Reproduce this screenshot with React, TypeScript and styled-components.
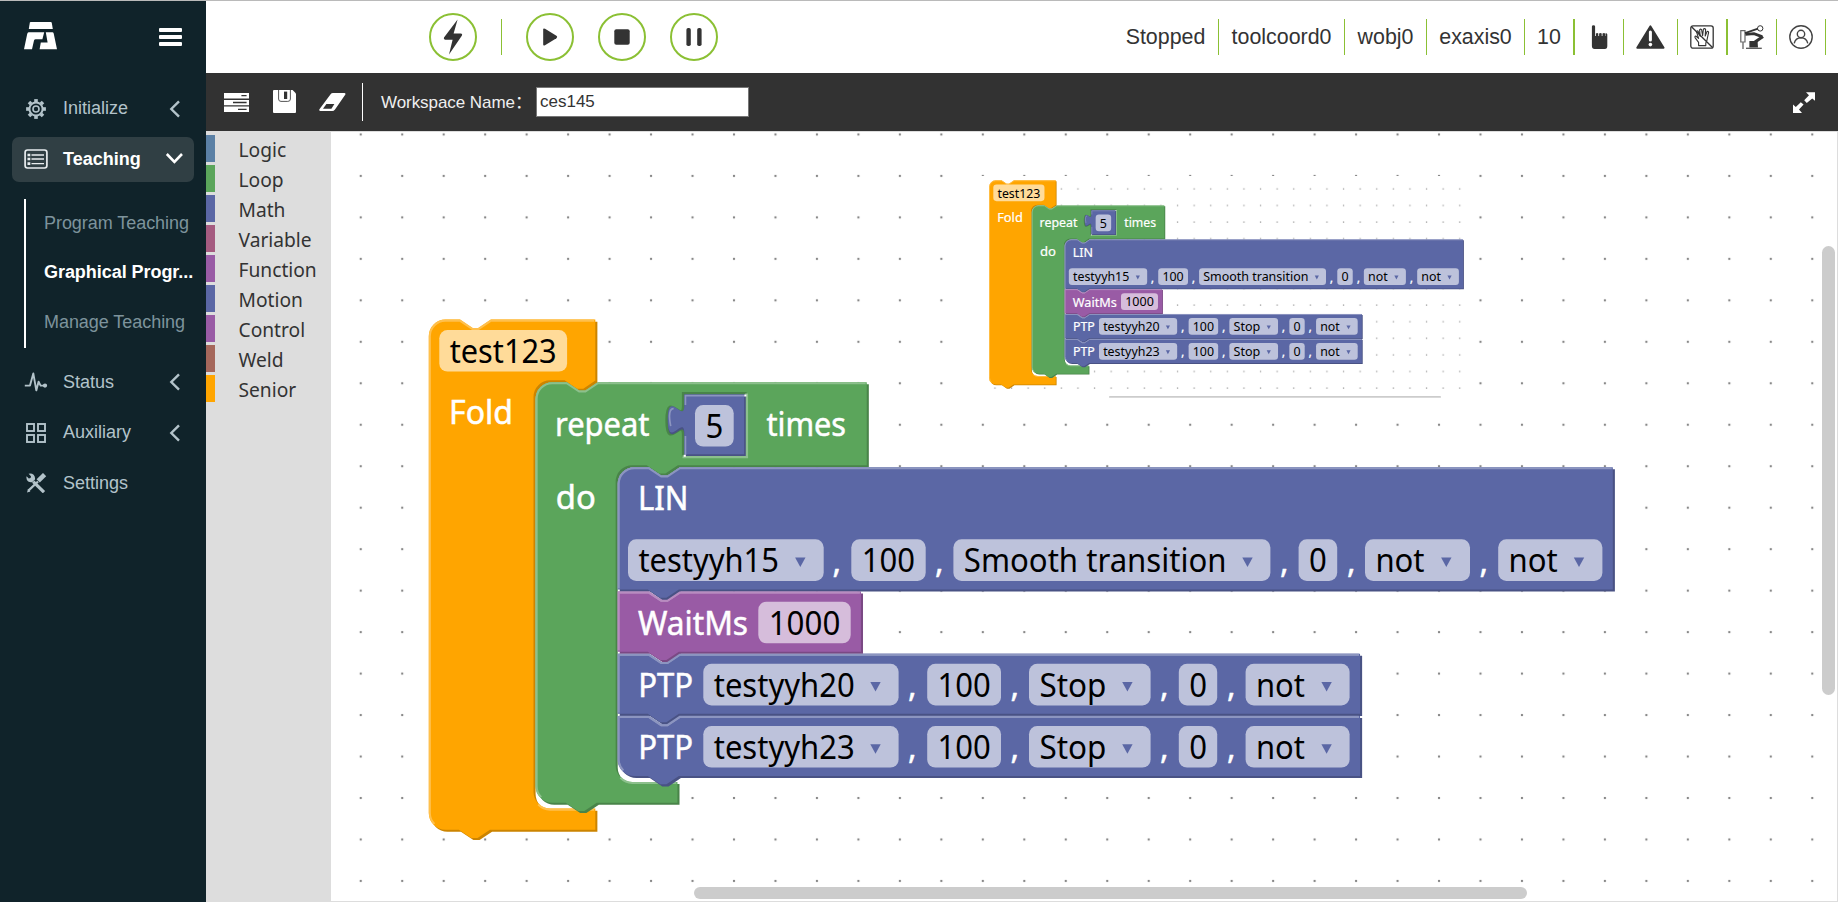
import React from "react";
import styled, { createGlobalStyle } from "styled-components";

const GlobalStyle = createGlobalStyle`
  html, body { margin: 0; padding: 0; }
  body { font-family: "Liberation Sans", Arial, sans-serif; overflow: hidden; }
  *, *::before, *::after { box-sizing: border-box; }
  svg { display: block; }
`;

const GREEN = "#8bc034";
const INK = "#333333";

/* ---------- Shell ---------- */

const Shell = styled.div`
  display: flex;
  width: 1838px;
  height: 902px;
  border-top: 1px solid #bababa;
  background: #fff;
`;

const Main = styled.main`
  flex: 1;
  min-width: 0;
  display: flex;
  flex-direction: column;
`;

/* ---------- Sidebar ---------- */

const Sidebar = styled.aside`
  width: 206px;
  flex: none;
  background: #10232a;
  display: flex;
  flex-direction: column;
  padding: 0 12px;
`;

const Brand = styled.div`
  height: 85px;
  display: flex;
  justify-content: space-between;
  padding: 21px 12px 0;
`;

const Burger = styled.div`
  width: 23px;
  height: 18px;
  margin-top: 6px;
  display: flex;
  flex-direction: column;
  justify-content: space-between;
  i { height: 4px; border-radius: 1px; background: #fff; }
`;

const NavItem = styled.div<{ $active?: boolean }>`
  height: 45px;
  margin-bottom: 5.5px;
  padding: 0 11px;
  display: flex;
  align-items: center;
  border-radius: 7px;
  font-size: 18px;
  font-weight: ${(p) => (p.$active ? 700 : 400)};
  color: ${(p) => (p.$active ? "#fff" : "#b3c3ca")};
  background: ${(p) => (p.$active ? "#303f44" : "transparent")};
`;

const NavIcon = styled.span`
  width: 26px;
  display: flex;
  justify-content: center;
  margin-right: 14px;
`;

const NavText = styled.span`
  flex: 1;
`;

const SubMenu = styled.div`
  margin: 11.5px 0 12px 12px;
  height: 149px;
  border-left: 2px solid #fff;
  padding-left: 18px;
`;

const SubItem = styled.div<{ $active?: boolean }>`
  height: 49.6px;
  line-height: 49px;
  white-space: nowrap;
  font-size: 18px;
  letter-spacing: -0.05px;
  font-weight: ${(p) => (p.$active ? 700 : 400)};
  color: ${(p) => (p.$active ? "#fff" : "#7d939c")};
`;

const ChevronLeft = () => (
  <svg width="18" height="18" viewBox="0 0 18 18" fill="none" stroke="#b3c3ca" strokeWidth="2.4">
    <path d="M14 1.3 6.3 9 14 16.7" />
  </svg>
);
const ChevronDown = () => (
  <svg width="18" height="18" viewBox="0 0 18 18" fill="none" stroke="#fff" strokeWidth="2.6">
    <path d="M1.8 4 9.4 11.8 17 4" />
  </svg>
);

const LogoMark = () => (
  <svg width="34" height="28" viewBox="0 0 34 28" fill="#fff">
    <path d="M6.6 0H26.8Q27.6 0 27.8 .9L28.8 7H4.8L5.8 .8Q6 0 6.6 0Z" />
    <path d="M4.6 10.2H20.2L18.4 17.2H11.6Q10.4 17.2 10 18.6L8 27.2H0L3.2 12Q3.6 10.2 4.6 10.2Z" />
    <path d="M21.8 10.2H28.4Q29.4 10.2 29.7 11.4L33 27.2H15.6L16.8 20.6H23.6Z" />
  </svg>
);

const GearIcon = () => (
  <svg width="20" height="20" viewBox="-10 -10 20 20" fill="none" stroke="#b3c3ca">
    <circle r="6.6" strokeWidth="2" />
    <circle r="3" strokeWidth="1.6" />
    {[0, 45, 90, 135, 180, 225, 270, 315].map((a) => (
      <path key={a} d="M0 -7V-9.9" strokeWidth="3.6" transform={`rotate(${a})`} />
    ))}
  </svg>
);
const TeachIcon = () => (
  <svg width="24" height="20" viewBox="0 0 24 20" fill="none" stroke="#e8edef">
    <rect x="1.1" y="1" width="21.8" height="18" rx="2.4" strokeWidth="1.7" />
    <path d="M7.5 6H20M7.5 10H20M7.5 14.6H20" strokeWidth="1.3" />
    <path d="M3.5 6h2.8M3.5 10h2.8M3.5 14.6h2.8" strokeWidth="2.6" />
  </svg>
);
const PulseIcon = () => (
  <svg width="24" height="20" viewBox="0 0 24 20" fill="none" stroke="#b3c3ca" strokeWidth="1.9">
    <path d="M.8 13.6H6L9.3 1.4 12.3 18.4 14.6 9.6 16.6 13.6H20" strokeLinejoin="round" />
    <circle cx="21" cy="13.6" r="1.2" fill="#b3c3ca" />
  </svg>
);
const GridIcon = () => (
  <svg width="20" height="20" viewBox="0 0 20 20" fill="none" stroke="#b3c3ca" strokeWidth="1.9">
    <rect x="1" y="1" width="7" height="7" />
    <rect x="12" y="1" width="7" height="7" />
    <rect x="1" y="12" width="7" height="7" />
    <rect x="12" y="12" width="7" height="7" />
  </svg>
);
const ToolsIcon = () => (
  <svg width="21" height="20" viewBox="0 0 21 20" fill="#b3c3ca" stroke="#b3c3ca">
    <path d="M7.2 8.6 18 19.2" strokeWidth="3.2" />
    <path d="M2.6 .8 5 3.2 4.6 5 2.8 5.4 .6 3.2Q-.2 6.6 2.2 8.4 4.2 9.6 6.4 9L9 6.4Q9.4 3.6 7.6 1.8 5.6 0 2.6 .8Z" stroke="none" />
    <path d="M12.2 7.8 18.6 1.6" strokeWidth="4.6" />
    <path d="M12 8.5 2.4 17.6" strokeWidth="2.2" />
    <path d="M1 19.4 2 16 4.4 18.4Z" stroke="none" />
  </svg>
);

/* ---------- Header ---------- */

const Header = styled.header`
  height: 72px;
  flex: none;
  display: flex;
  justify-content: space-between;
  align-items: center;
  padding: 0 12px 0 223px;
`;

const Controls = styled.div`
  display: flex;
  align-items: center;
  gap: 24px;
`;

const RoundButton = styled.button`
  width: 48px;
  height: 48px;
  padding: 0;
  border: 2px solid ${GREEN};
  border-radius: 50%;
  background: #fff;
  display: grid;
  place-items: center;
`;

const Rule = styled.span`
  width: 1px;
  height: 36px;
  background: ${GREEN};
`;

const StatusBar = styled.div`
  display: flex;
  align-items: center;
`;

const StatusCell = styled.div<{ $w: number; $line?: number }>`
  width: ${(p) => p.$w}px;
  height: 36px;
  border-right: ${(p) => p.$line ?? 1}px solid ${GREEN};
  display: flex;
  align-items: center;
  justify-content: center;
  font-size: 21.4px;
  white-space: nowrap;
  color: ${INK};
`;

const HandPointer = () => (
  <svg width="17" height="24" viewBox="0 0 17 24" fill={INK}>
    <path d="M.9 1.6Q.9.2 2.5.2T4.1 1.6V11h.8V8.6q1.4-1 2.4 0V11h.8V8.4q1.5-.9 2.6 0V11h.8V8.4q1.5-.9 2.6 0V11h.4V8.4q1.6-.3 1.8 1.2V21q0 3-2.4 3H3.6Q.9 24 .9 21Z" />
  </svg>
);
const WarnIcon = () => (
  <svg width="29" height="24" viewBox="0 0 29 24">
    <path d="M14.4 1.2 27.6 22.8H1.2Z" fill={INK} stroke={INK} strokeWidth="1.8" strokeLinejoin="round" />
    <path d="M14.4 7V15" stroke="#fff" strokeWidth="3" strokeLinecap="round" />
    <circle cx="14.4" cy="19.6" r="1.8" fill="#fff" />
  </svg>
);
const NoHandIcon = () => (
  <svg width="24" height="24" viewBox="0 0 24 24" fill="none" stroke={INK} strokeWidth="1.1" strokeLinejoin="round" strokeLinecap="round">
    <rect x=".8" y=".8" width="22.4" height="22.4" rx="2.2" strokeWidth="1.3" />
    <path d="M2 2.2 22 22" strokeWidth="1.3" />
    <path d="M8.6 20.6V17.4L5.2 12.8Q4.4 11.2 5.8 11L8.6 13.4 6.6 7.2Q6.6 5.6 8 6L10.2 11.2 9.6 5Q10.2 3.4 11.6 4.6L12.6 10.6 13.4 4.2Q14.6 3 15.6 4.4L15.2 11 17 6.6Q18.4 5.8 18.6 7.4L16.8 15.8 15.8 18V20.6Z" />
  </svg>
);
const RobotIcon = () => (
  <svg width="24" height="24" viewBox="0 0 24 24" fill="none" stroke={INK}>
    <path d="M.8 5.6H5V17H.8Z" stroke="#666" strokeWidth="1.2" />
    <path d="M3 17V24" stroke="#777" strokeWidth="1.5" />
    <path d="M5 8.2 18 3.6" strokeWidth="1.8" />
    <circle cx="20.2" cy="3.4" r="2.7" strokeWidth="1" />
    <path d="M5.4 9.4 14 8.6 22 11.6" strokeWidth="2.8" />
    <path d="M23 11.4 15 17" strokeWidth="3" />
    <path d="M9.4 16H17.6L18 22.6H9.4Z" fill={INK} stroke="none" />
    <path d="M6 23.3H21.8" strokeWidth="1.3" stroke="#555" />
  </svg>
);
const UserIcon = () => (
  <svg width="24" height="24" viewBox="0 0 24 24" fill="none" stroke="#444" strokeWidth="1.4">
    <circle cx="12" cy="12" r="11.2" />
    <circle cx="12" cy="9" r="3.7" />
    <path d="M5.2 18.4Q6.6 12.8 12 12.8T18.8 18.4" />
  </svg>
);

/* ---------- Toolbar ---------- */

const Toolbar = styled.div`
  height: 58px;
  flex: none;
  background: #323232;
  display: flex;
  align-items: center;
  padding: 0 23px 0 18px;
  color: #efefef;
  font-size: 17px;
`;

const Tool = styled.span<{ $gap: number; $lift?: number }>`
  margin-right: ${(p) => p.$gap}px;
  margin-bottom: ${(p) => p.$lift ?? 0}px;
`;

const ToolRule = styled.span`
  width: 1px;
  height: 38px;
  background: #fff;
  margin-right: 18px;
`;

const NameLabel = styled.label`
  width: 155px;
  margin-bottom: 4px;
  white-space: nowrap;
  letter-spacing: -0.06px;
  font-family: "Liberation Sans", "Noto Sans CJK SC", sans-serif;
`;

const NameInput = styled.input`
  width: 213px;
  height: 30px;
  padding: 0 3px;
  border: 1px solid #767676;
  border-radius: 0;
  background: #fff;
  color: ${INK};
  font: 17px "Liberation Sans", Arial, sans-serif;
`;

const Spacer = styled.span`
  flex: 1;
`;

/* ---------- Workspace ---------- */

const Work = styled.section`
  flex: 1;
  min-height: 0;
  display: flex;
`;

const Toolbox = styled.div`
  width: 125px;
  flex: none;
  background: #ddd;
  padding-top: 4px;
  display: flex;
  flex-direction: column;
  gap: 3px;
`;

const Category = styled.div<{ $color: string }>`
  height: 27px;
  line-height: 30px;
  border-left: 9px solid ${(p) => p.$color};
  padding-left: 23.5px;
  font-family: "Noto Sans", "Open Sans", sans-serif;
  font-size: 19.2px;
  color: ${INK};
`;

const Canvas = styled.div`
  position: relative;
  flex: 1;
  min-width: 0;
  border: solid #ddd;
  border-width: 1px 1px 1px 0;
  overflow: hidden;
`;

const Thumb = styled.div<{ $vertical?: boolean }>`
  position: absolute;
  border-radius: 7px;
  background: #ccc;
  ${(p) =>
    p.$vertical
      ? "right: 2px; top: 114px; width: 13px; height: 449px;"
      : "left: 363px; bottom: 2px; width: 833px; height: 12px;"}
`;

/* ---------- Blocks ---------- */

const U = 2.0736;

const BlockText = styled.text<{ $dark?: boolean }>`
  font-family: "Noto Sans", "Open Sans", sans-serif;
  font-size: 32px;
  fill: ${(p) => (p.$dark ? "#000" : "#fff")};
  stroke: ${(p) => (p.$dark ? "none" : "#fff")};
  stroke-width: 0.5px;
`;

type Tone = { fill: string; dark: string; light: string };
const ORANGE: Tone = { fill: "#ffa500", dark: "#cc8400", light: "#ffc04d" };
const LEAF: Tone = { fill: "#5ba55b", dark: "#498449", light: "#8cc08c" };
const BLUE: Tone = { fill: "#5b67a5", dark: "#495284", light: "#8c95c0" };
const PURPLE: Tone = { fill: "#995ba5", dark: "#7a4984", light: "#b88cc0" };

const NOTCH = "l6,4 3,0 6,-4";
const NOTCH_BACK = "l-6,4 -3,0 -6,-4";

const Shape = ({ x, y, tone, d, light }: { x: number; y: number; tone: Tone; d: string; light: string }) => (
  <g transform={`translate(${x} ${y}) scale(${U})`}>
    <path d={d} fill={tone.dark} transform="translate(1 1)" />
    <path d={d} fill={tone.fill} />
    <path d={light} fill="none" stroke={tone.light} strokeWidth="1" />
  </g>
);

type StackProps = { x: number; y: number; w: number; h: number; tone: Tone; first?: boolean; last?: boolean };
const Stack = ({ x, y, w, h, tone, first, last }: StackProps) => {
  const top = first ? "M0,8 A8,8 0 0,1 8,0" : "M0,0";
  const end = last ? "H8 a8,8 0 0,1 -8,-8 z" : "H0 z";
  const d = `${top} H15 ${NOTCH} H${w} V${h} H29.5 ${NOTCH_BACK} ${end}`;
  const left = last ? `M2.7,${h - 2.7} A7.5,7.5 0 0,1 .5,${h - 8}` : `M.5,${h - 0.5}`;
  const light = `${left} ${first ? "V8 A7.5,7.5 0 0,1 8,.5" : "V.5"} H15 ${NOTCH} H${w - 0.5}`;
  return <Shape x={x} y={y} tone={tone} d={d} light={light} />;
};

type WrapProps = {
  x: number; y: number; w: number; h: number; inX: number; inTop: number; inBottom: number; arm: number; tone: Tone;
};
const Wrap = ({ x, y, w, h, inX, inTop, inBottom, arm, tone }: WrapProps) => {
  const d =
    `M0,8 A8,8 0 0,1 8,0 H15 ${NOTCH} H${w} V${inTop} H${inX + 30} ${NOTCH_BACK} h-7 a8,8 0 0,0 -8,8 ` +
    `V${inBottom - 8} a8,8 0 0,0 8,8 H${arm} V${h} H29.5 ${NOTCH_BACK} H8 a8,8 0 0,1 -8,-8 z`;
  const light =
    `M2.7,${h - 2.7} A7.5,7.5 0 0,1 .5,${h - 8} V8 A7.5,7.5 0 0,1 8,.5 H15 ${NOTCH} H${w - 0.5} ` +
    `M${inX + 2.3},${inBottom - 2} A8.5,8.5 0 0,0 ${inX + 8},${inBottom + 0.5} H${arm - 0.5}`;
  return <Shape x={x} y={y} tone={tone} d={d} light={light} />;
};

const Label = ({ x, y, len, children }: { x: number; y: number; len: number; children: string }) => (
  <BlockText x={x} y={y} textLength={len} lengthAdjust="spacingAndGlyphs">{children}</BlockText>
);

type FieldProps = { x: number; y: number; w: number; len: number; arrow?: number; tone?: Tone; children: string };
const Field = ({ x, y, w, len, arrow, tone = BLUE, children }: FieldProps) => (
  <g>
    <rect x={x} y={y} width={w} height="41.6" rx="8.2" fill="#fff" fillOpacity=".6" />
    <BlockText $dark x={x + 10.4} y={y + 33} textLength={len} lengthAdjust="spacingAndGlyphs">{children}</BlockText>
    {arrow && <path d={`M${arrow - 5.2},${y + 18.2}h10.4l-5.2,9.6z`} fill={tone.fill} />}
  </g>
);

const Comma = ({ x, y }: { x: number; y: number }) => <BlockText x={x} y={y}>,</BlockText>;

const Ptp = ({ y, point }: { y: number; point: string }) => (
  <g transform={`translate(0 ${y})`}>
    <Label x={638.2} y={43.5} len={54.8}>PTP</Label>
    <Field x={703.3} y={10.2} w={195.3} len={141} arrow={875.5}>{point}</Field>
    <Comma x={908} y={43.5} />
    <Field x={927.2} y={10.2} w={73.8} len={53.2}>100</Field>
    <Comma x={1010.5} y={43.5} />
    <Field x={1029} y={10.2} w={121.6} len={67} arrow={1127.4}>Stop</Field>
    <Comma x={1160} y={43.5} />
    <Field x={1178.8} y={10.2} w={38.4} len={17.8}>0</Field>
    <Comma x={1227} y={43.5} />
    <Field x={1245.6} y={10.2} w={104} len={49} arrow={1326.6}>not</Field>
  </g>
);

const PUZZLE = "V20 c0,-10 -8,8 -8,-7.5 s8,2.5 8,-7.5";

const Program = () => (
  <g>
    <Wrap x={428.8} y={319.6} w={80.3} h={246} inX={50.5} inTop={29.3} inBottom={235.8} arm={80.3} tone={ORANGE} />
    <Field x={439.3} y={330} w={127.8} len={107} tone={ORANGE}>test123</Field>
    <Label x={449} y={423.6} len={64}>Fold</Label>

    <Wrap x={535.6} y={382.2} w={159.7} h={202.8} inX={38.6} inTop={40} inBottom={192.8} arm={68.4} tone={LEAF} />
    <Label x={555} y={436} len={94.5}>repeat</Label>
    <Label x={766.5} y={436} len={79.5}>times</Label>
    <Label x={555.8} y={508.9} len={40}>do</Label>
    <g transform={`translate(684.4 394.6) scale(${U})`}>
      <path d={`M30,-.5 H-.5 V5 M-.5,30 ${PUZZLE}`} fill="none" stroke={LEAF.dark} strokeWidth="1.4" />
      <path d="M30,-.5 V30 H-.9" fill="none" stroke={LEAF.light} strokeWidth="1.4" />
      <path d={`M0,0 H29.6 V29.6 H0 ${PUZZLE} z`} fill={BLUE.dark} />
      <path d="M0,0 H28.8 V28.8 H0 V19 c0,-10 -8,8 -8,-7 s8,2.5 8,-7 z" fill={BLUE.fill} />
      <path d="M29,.5 H.5 V5 M.5,29 V20 M-6.6,15.2 q-1.6,-8.4 1.4,-8.4" fill="none" stroke={BLUE.light} strokeWidth=".8" />
      <path d="M28.9,-.1h1v1h-1zM-.3,29h1v1h-1z" fill="#fff" />
    </g>
    <Field x={695} y={405} w={38.7} len={17.8}>5</Field>

    <Stack x={617.7} y={715.9} w={358} h={29} tone={BLUE} last />
    <Stack x={617.7} y={653.7} w={358} h={29} tone={BLUE} />
    <Stack x={617.7} y={591.5} w={117.3} h={29} tone={PURPLE} />
    <Stack x={617.7} y={467.2} w={479.9} h={59} tone={BLUE} first />
    <g fill="none" strokeWidth={U}>
      <path stroke={PURPLE.light} d="M618.7,592.5 h30.1 l12.4,8.3 6.2,0 12.4,-8.3 h180" />
      <path stroke={BLUE.light} d="M618.7,654.7 h30.1 l12.4,8.3 6.2,0 12.4,-8.3 h679" />
      <path stroke={BLUE.light} d="M618.7,716.9 h30.1 l12.4,8.3 6.2,0 12.4,-8.3 h679" />
    </g>

    <Label x={638} y={510} len={50.5}>LIN</Label>
    <Field x={628} y={539.3} w={195.7} len={140.5} arrow={800.3}>testyyh15</Field>
    <Comma x={832.5} y={572.5} />
    <Field x={851.3} y={539.3} w={74.4} len={53.2}>100</Field>
    <Comma x={935} y={572.5} />
    <Field x={953.4} y={539.3} w={317} len={262.8} arrow={1247.5}>Smooth transition</Field>
    <Comma x={1280} y={572.5} />
    <Field x={1298.6} y={539.3} w={38.6} len={17.8}>0</Field>
    <Comma x={1347} y={572.5} />
    <Field x={1365} y={539.3} w={105} len={49.2} arrow={1446.3}>not</Field>
    <Comma x={1479.6} y={572.5} />
    <Field x={1498.2} y={539.3} w={104.2} len={49.2} arrow={1579}>not</Field>

    <Label x={638} y={635.2} len={110}>WaitMs</Label>
    <Field x={758.3} y={601.7} w={92.4} len={71.6} tone={PURPLE}>1000</Field>

    <Ptp y={653.6} point="testyyh20" />
    <Ptp y={715.8} point="testyyh23" />
  </g>
);

const Drawing = () => (
  <svg width="1506" height="769" viewBox="331 132 1506 769">
    <defs>
      <pattern id="grid" x="340" y="113.7" width="41.472" height="41.472" patternUnits="userSpaceOnUse">
        <rect x="19.7" y="19.7" width="2.1" height="2.1" fill="#888" />
      </pattern>
      <pattern id="gridSmall" x="986.6" y="181" width="16.6" height="16.6" patternUnits="userSpaceOnUse">
        <rect x="7.7" y="7.3" width="1.3" height="1.2" fill="#999" />
      </pattern>
    </defs>
    <rect x="331" y="132" width="1506" height="769" fill="url(#grid)" />
    <rect x="977" y="176" width="493" height="228" fill="#fff" />
    <rect x="987" y="182" width="476" height="213" fill="url(#gridSmall)" />
    <Program />
    <g transform="translate(989.1 180.3) scale(.4003) translate(-428.8 -319.5)">
      <Program />
    </g>
    <rect x="1109" y="396" width="332" height="1.8" rx=".9" fill="#ccc" />
  </svg>
);

const CATEGORIES: [string, string][] = [
  ["Logic", "#5b80a5"],
  ["Loop", "#5ba55b"],
  ["Math", "#5b67a5"],
  ["Variable", "#a55b80"],
  ["Function", "#995ba5"],
  ["Motion", "#5b67a5"],
  ["Control", "#995ba5"],
  ["Weld", "#a5675b"],
  ["Senior", "#ffa500"],
];

export default function App() {
  return (
    <Shell>
      <GlobalStyle />
      <Sidebar>
        <Brand>
          <LogoMark />
          <Burger><i /><i /><i /></Burger>
        </Brand>
        <NavItem>
          <NavIcon><GearIcon /></NavIcon>
          <NavText>Initialize</NavText>
          <ChevronLeft />
        </NavItem>
        <NavItem $active>
          <NavIcon><TeachIcon /></NavIcon>
          <NavText>Teaching</NavText>
          <ChevronDown />
        </NavItem>
        <SubMenu>
          <SubItem>Program Teaching</SubItem>
          <SubItem $active>Graphical Progr...</SubItem>
          <SubItem>Manage Teaching</SubItem>
        </SubMenu>
        <NavItem>
          <NavIcon><PulseIcon /></NavIcon>
          <NavText>Status</NavText>
          <ChevronLeft />
        </NavItem>
        <NavItem>
          <NavIcon><GridIcon /></NavIcon>
          <NavText>Auxiliary</NavText>
          <ChevronLeft />
        </NavItem>
        <NavItem>
          <NavIcon><ToolsIcon /></NavIcon>
          <NavText>Settings</NavText>
        </NavItem>
      </Sidebar>

      <Main>
        <Header>
          <Controls>
            <RoundButton>
              <svg width="20" height="36" viewBox="0 0 20 36" fill={INK}>
                <path d="M14.6.6 10.6 14.6H17.8Q19.8 14.8 18.8 16.8L6 35.6 9.6 20.8H2.2Q.2 20.6 1 18.6Z" />
              </svg>
            </RoundButton>
            <Rule />
            <RoundButton>
              <svg width="16" height="18" viewBox="0 0 16 18" fill={INK}>
                <path d="M1.2 1.6Q1.2-.2 3 .8L14.4 7.8Q15.8 9 14.4 10.2L3 17.2Q1.2 18.2 1.2 16.4Z" />
              </svg>
            </RoundButton>
            <RoundButton>
              <svg width="16" height="16" viewBox="0 0 16 16" fill={INK}>
                <rect x=".3" y=".3" width="15.4" height="15.4" rx="2" />
              </svg>
            </RoundButton>
            <RoundButton>
              <svg width="16" height="18" viewBox="0 0 16 18" fill={INK}>
                <rect x=".4" y="0" width="4.4" height="18" rx="1.8" />
                <rect x="11.2" y="0" width="4.4" height="18" rx="1.8" />
              </svg>
            </RoundButton>
          </Controls>
          <StatusBar>
            <StatusCell $w={106}>Stopped</StatusCell>
            <StatusCell $w={126}>toolcoord0</StatusCell>
            <StatusCell $w={82}>wobj0</StatusCell>
            <StatusCell $w={98}>exaxis0</StatusCell>
            <StatusCell $w={50} $line={2}>10</StatusCell>
            <StatusCell $w={49}><HandPointer /></StatusCell>
            <StatusCell $w={54}><WarnIcon /></StatusCell>
            <StatusCell $w={50} $line={2}><NoHandIcon /></StatusCell>
            <StatusCell $w={49}><RobotIcon /></StatusCell>
            <StatusCell $w={49}><UserIcon /></StatusCell>
          </StatusBar>
        </Header>

        <Toolbar>
          <Tool $gap={24}>
            <svg width="25" height="19" viewBox="0 0 25 19">
              <path d="M0 0H25V5.4H0ZM0 6.9H25V12.2H0ZM0 13.6H25V19H0Z" fill="#fff" />
              <path d="M17.4 2.7H22.6M9 9.5H22.6M14 16.3H22.6" stroke="#323232" strokeWidth="1.3" />
            </svg>
          </Tool>
          <Tool $gap={22.5} $lift={2}>
            <svg width="23" height="23" viewBox="0 0 23 23">
              <path d="M1 0H19.6L23 3.4V22Q23 23 22 23H1Q0 23 0 22V1Q0 0 1 0Z" fill="#fff" />
              <path d="M5.6 0V9Q5.6 11.4 8 11.4H14.8Q17.4 11.4 17.4 9V0" fill="none" stroke="#555" strokeWidth="1" />
              <path d="M11 1.6H14.2V9H11Z" fill="#323232" />
            </svg>
          </Tool>
          <Tool $gap={16.5}>
            <svg width="27" height="18" viewBox="0 0 27 18">
              <path d="M11.6 1.2Q12.4 0 14 0H25.4Q27 .2 26.2 1.8L16 16.4Q14.8 18 13.2 18H1.4Q-.4 17.6.6 16Z" fill="#fff" />
              <path d="M7.4 11H15.4L12.4 15.8H4Z" fill="#323232" />
            </svg>
          </Tool>
          <ToolRule />
          <NameLabel>Workspace Name：</NameLabel>
          <NameInput defaultValue="ces145" />
          <Spacer />
          <svg width="22" height="21" viewBox="0 0 22 21" fill="#fff">
            <path d="M13 .2H22V8.8L19.2 6.4 13.8 11 11.2 8.2 16 3.2Z" />
            <path d="M0 12.4 2.8 15 7.8 10.2 10.6 12.6 6 17.6 9 21H0Z" />
          </svg>
        </Toolbar>

        <Work>
          <Toolbox>
            {CATEGORIES.map(([name, color]) => (
              <Category key={name} $color={color}>{name}</Category>
            ))}
          </Toolbox>
          <Canvas>
            <Drawing />
            <Thumb $vertical />
            <Thumb />
          </Canvas>
        </Work>
      </Main>
    </Shell>
  );
}
